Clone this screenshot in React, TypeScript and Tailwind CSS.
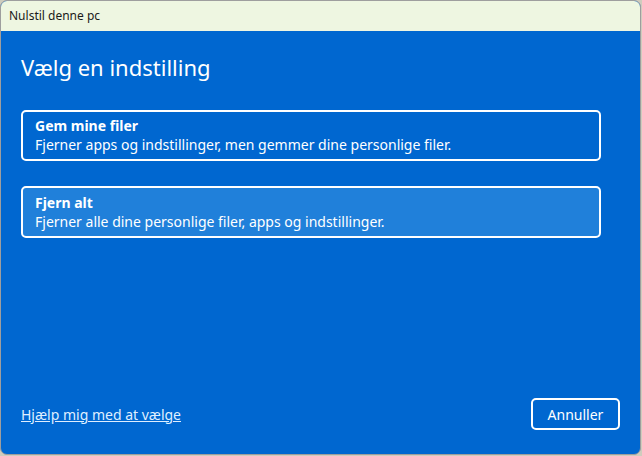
import React from "react";

export default function App() {
  const font = { fontFamily: '"Noto Sans", "Open Sans", sans-serif' };
  return (
    <div className="w-[642px] h-[456px] bg-[#cfccbd]" style={font}>
      <div className="w-[641px] h-[455px] flex flex-col rounded-t-[7px] rounded-b-[7px] overflow-hidden border border-[#9e9e9e] bg-[#0067d0]">
        <div className="h-[30px] shrink-0 bg-[#eef6e1] flex items-center pl-[8px] text-[12px] text-[#1a1a1a]">
          Nulstil denne pc
        </div>
        <div className="flex-1 flex flex-col px-[20px] text-white">
          <h1 className="mt-[21px] text-[22px] leading-[30px] font-normal">Vælg en indstilling</h1>
          <div className="mt-[28px] flex flex-col gap-[25px] w-[580px]">
            <div className="border-2 border-white rounded-[5px] h-[51px] px-[12px] flex flex-col justify-center">
              <div className="text-[14px] font-bold leading-[18px]">Gem mine filer</div>
              <div className="text-[14px] leading-[19px]">Fjerner apps og indstillinger, men gemmer dine personlige filer.</div>
            </div>
            <div className="border-2 border-white rounded-[5px] h-[52px] px-[12px] flex flex-col justify-center bg-[#2080da]">
              <div className="text-[14px] font-bold leading-[18px]">Fjern alt</div>
              <div className="text-[14px] leading-[19px]">Fjerner alle dine personlige filer, apps og indstillinger.</div>
            </div>
          </div>
          <div className="mt-auto mb-[24px] flex items-center justify-between">
            <a className="text-[14px] underline text-[#dfeeff]" href="#">Hjælp mig med at vælge</a>
            <button className="w-[89px] h-[32px] border-2 border-white rounded-[5px] text-[14px]">Annuller</button>
          </div>
        </div>
      </div>
    </div>
  );
}
